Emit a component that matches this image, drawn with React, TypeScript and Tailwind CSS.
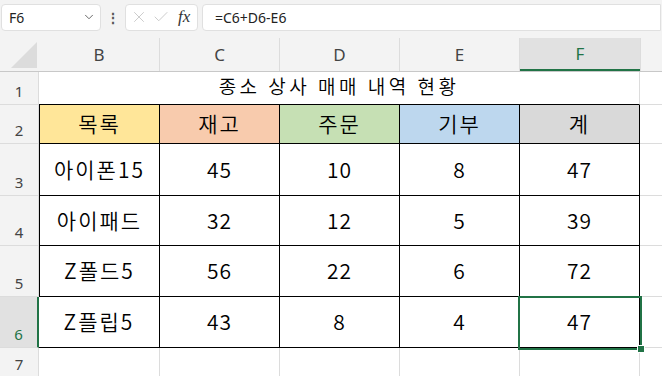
import { ChevronDown, X, Check } from 'lucide-react';

const cols = ['B', 'C', 'D', 'E', 'F'];
const colW = [121, 120, 120, 120, 120];
const rowH = [33, 39, 52, 50, 51, 51];

const heads = [
  { t: '목록', bg: 'bg-[#ffe699]' },
  { t: '재고', bg: 'bg-[#f8cbad]' },
  { t: '주문', bg: 'bg-[#c6e0b4]' },
  { t: '기부', bg: 'bg-[#bdd7ee]' },
  { t: '계', bg: 'bg-[#d9d9d9]' },
];

const rows = [
  ['아이폰15', '45', '10', '8', '47'],
  ['아이패드', '32', '12', '5', '39'],
  ['Z폴드5', '56', '22', '6', '72'],
  ['Z플립5', '43', '8', '4', '47'],
];

const cellFont = { fontFamily: '"Noto Sans CJK KR", "Noto Sans", sans-serif' };
const uiFont = { fontFamily: '"Noto Sans", "Liberation Sans", sans-serif' };

function RowHead({ n, h, sel }: { n: number; h: number; sel?: boolean }) {
  return (
    <div
      className={`flex w-[39px] shrink-0 items-end justify-center pb-[2px] text-[15px] border-b border-[#dcdcdc] ${
        sel ? 'bg-[#e1e1e1] text-[#217346] border-r-2 border-r-[#217346]' : 'bg-[#f3f3f3] text-[#444] border-r border-r-[#dcdcdc]'
      }`}
      style={{ height: h, ...uiFont }}
    >
      {n}
    </div>
  );
}

export default function App() {
  return (
    <div className="w-[662px] h-[376px] overflow-hidden bg-white relative" style={uiFont}>
      {/* formula bar */}
      <div className="flex h-[33px] items-center gap-[4px] bg-[#f3f3f3] px-[1px] pt-[1px]">
        <div className="flex h-[27px] w-[100px] items-center justify-between rounded-[4px] border border-[#e0e0e0] bg-white pl-[7px] pr-[4px] text-[14px] text-[#222]">
          <span>F6</span>
          <ChevronDown size={14} strokeWidth={1.5} className="text-[#555]" />
        </div>
        <span className="w-[16px] text-center text-[14px] font-bold text-[#555]">⋮</span>
        <div className="flex h-[27px] w-[73px] items-center gap-[4px] rounded-[4px] border border-[#e0e0e0] bg-white pl-[4px]">
          <X size={18} strokeWidth={1} className="text-[#bbb]" />
          <Check size={18} strokeWidth={1} className="text-[#bbb]" />
          <span className="ml-[4px] text-[17px] italic text-[#333]" style={{ fontFamily: '"Liberation Serif", serif' }}>
            fx
          </span>
        </div>
        <div className="flex h-[27px] flex-1 items-center rounded-l-[4px] border border-[#e0e0e0] bg-white pl-[12px] text-[14px] text-[#222]">
          =C6+D6-E6
        </div>
      </div>

      {/* column headers */}
      <div className="flex h-[39px] bg-[#f3f3f3] pt-[5px] border-b border-[#c8c8c8]">
        <div className="flex w-[39px] shrink-0 items-end justify-end pb-[3px] pr-[2px]">
          <div className="h-0 w-0" style={{ borderBottom: '26px solid #dcdcdc', borderLeft: '26px solid transparent' }} />
        </div>
        {cols.map((c, i) => (
          <div
            key={c}
            className={`flex shrink-0 items-center justify-center text-[17px] ${
              c === 'F'
                ? 'bg-[#e1e1e1] text-[#217346] border-b-2 border-[#217346]'
                : 'text-[#444] border-r border-[#dcdcdc]'
            }`}
            style={{ width: colW[i] }}
          >
            {c}
          </div>
        ))}
        <div className="flex-1 border-l border-[#dcdcdc]" />
      </div>

      {/* row 1 */}
      <div className="flex">
        <RowHead n={1} h={rowH[0]} />
        <div
          className="flex w-[601px] shrink-0 items-center justify-center border-b border-black border-r border-r-[#dcdcdc] pb-[3px] text-[19px] font-[350] tracking-[3.5px] text-black"
          style={{ height: rowH[0], ...cellFont }}
        >
          종소 상사 매매 내역 현황
        </div>
        <div className="flex-1 border-b border-[#dcdcdc]" />
      </div>

      {/* row 2 */}
      <div className="flex">
        <RowHead n={2} h={rowH[1]} />
        <div className="flex border-l border-black">
          {heads.map((h, i) => (
            <div
              key={h.t}
              className={`flex shrink-0 items-center justify-center border-b border-r border-black text-[21px] font-[350] tracking-[2px] text-black ${h.bg}`}
              style={{ width: i === 0 ? colW[i] - 1 : colW[i], height: rowH[1], ...cellFont }}
            >
              {h.t}
            </div>
          ))}
        </div>
        <div className="flex-1 border-b border-[#dcdcdc]" />
      </div>

      {/* data rows */}
      {rows.map((r, ri) => (
        <div key={ri} className="flex">
          <RowHead n={ri + 3} h={rowH[ri + 2]} sel={ri === 3} />
          <div className={`flex border-black ${ri === 3 ? '' : 'border-l'}`}>
            {r.map((v, i) => (
              <div
                key={i}
                className={`flex shrink-0 items-center justify-center border-b border-r border-black text-[21px] font-[350] text-black ${
                  i === 0 ? 'tracking-[2px]' : 'tracking-[1px]'
                }`}
                style={{ width: i === 0 && ri !== 3 ? colW[i] - 1 : colW[i], height: rowH[ri + 2], ...cellFont }}
              >
                {v}
              </div>
            ))}
          </div>
          <div className="flex-1 border-b border-[#dcdcdc]" />
        </div>
      ))}

      {/* row 7 */}
      <div className="flex">
        <RowHead n={7} h={30} />
        {colW.map((w, i) => (
          <div key={i} className="shrink-0 border-r border-[#dcdcdc]" style={{ width: w, height: 30 }} />
        ))}
      </div>

      {/* selection F6 */}
      <div className="absolute left-[518px] top-[296px] h-[54px] w-[124px] border-2 border-[#217346]">
        <div className="absolute -bottom-[4px] -right-[4px] h-[6px] w-[6px] bg-[#217346] ring-1 ring-white" />
      </div>
    </div>
  );
}
